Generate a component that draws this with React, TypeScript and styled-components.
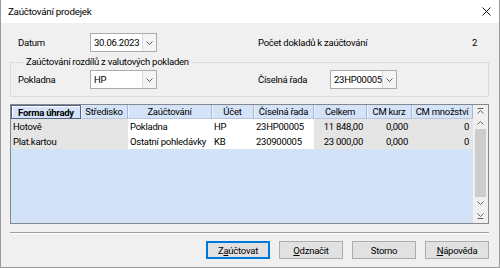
import React from 'react';
import styled, { createGlobalStyle } from 'styled-components';

const GlobalStyle = createGlobalStyle`
  html, body { margin: 0; padding: 0; background: #ffffff; }
  body { font-family: Roboto, "Noto Sans", sans-serif; font-size: 9.5px; color: #000; letter-spacing: -0.25px; }
  * { box-sizing: border-box; }
`;

const Window = styled.div`
  width: 500px;
  height: 268px;
  background: #f0f0f0;
  border: 1px solid #9a9a9a;
  border-top: none;
  display: flex;
  flex-direction: column;
  overflow: hidden;
`;

const TitleBar = styled.div`
  height: 23px;
  flex: none;
  background: #ffffff;
  display: flex;
  align-items: center;
  justify-content: space-between;
  padding: 0 8px 0 7px;
`;

const Title = styled.span`
  font-size: 9.8px;
`;

const Body = styled.div`
  flex: 1;
  display: flex;
  flex-direction: column;
  padding: 0 10px 0 9px;
`;

const FormRow = styled.div<{ $mt?: number; $pl?: number }>`
  display: flex;
  align-items: center;
  height: 19px;
  margin-top: ${(p) => p.$mt ?? 0}px;
  padding-left: ${(p) => p.$pl ?? 0}px;
`;

const Half = styled.div<{ $w?: number }>`
  display: flex;
  align-items: center;
  width: ${(p) => (p.$w ? `${p.$w}px` : 'auto')};
  flex: ${(p) => (p.$w ? 'none' : '1')};
`;

const Label = styled.span<{ $w?: number }>`
  width: ${(p) => (p.$w ? `${p.$w}px` : 'auto')};
  flex: ${(p) => (p.$w ? 'none' : '1')};
`;

const Value = styled.span`
  padding-right: 12px;
`;

const Combo = styled.div`
  width: 67px;
  height: 19px;
  display: flex;
  background: #ffffff;
  border: 1px solid #acacac;
`;

const ComboText = styled.span`
  flex: 1;
  padding-left: 3px;
  line-height: 17px;
  white-space: nowrap;
  overflow: hidden;
`;

const ComboBtn = styled.span`
  width: 14px;
  display: flex;
  align-items: center;
  justify-content: center;
  background: #f4f4f4;
  border-left: 1px solid #d9d9d9;
`;

const Group = styled.fieldset`
  margin: 3px 0 0 0;
  padding: 0 8px 7px 7px;
  border: 1px solid #dcdcdc;
  min-width: 0;
`;

const Legend = styled.legend`
  margin-left: 6px;
  padding: 0 2px;
  line-height: 14px;
`;

const TableFrame = styled.div`
  margin-top: 7px;
  height: 120px;
  display: flex;
  border: 1px solid #828790;
  background: #d3e2f7;
`;

const Grid = styled.div`
  width: 462px;
  display: grid;
  grid-template-columns: 70px 47px 84px 42px 60px 53px 45px 61px;
  grid-auto-rows: 15px;
  grid-template-rows: 14px;
  align-content: start;
`;

const HeadCell = styled.div<{ $active?: boolean }>`
  display: flex;
  align-items: center;
  justify-content: center;
  white-space: nowrap;
  overflow: hidden;
  background: #d4e3f8;
  border-right: 1px solid #a6b7cf;
  border-bottom: 1px solid #b9c8dc;
  font-weight: ${(p) => (p.$active ? 700 : 400)};
  ${(p) =>
    p.$active
      ? 'border: 1px solid #55657f; box-shadow: inset 1px 1px 0 #ffffff;'
      : 'box-shadow: inset 1px 0 0 #eef4fc;'}
`;

const Cell = styled.div<{ $tone: 'gray' | 'white'; $right?: boolean }>`
  display: flex;
  align-items: center;
  justify-content: ${(p) => (p.$right ? 'flex-end' : 'flex-start')};
  padding: ${(p) => (p.$right ? '0 4px 0 0' : '0 0 0 2px')};
  white-space: nowrap;
  overflow: hidden;
  background: ${(p) => (p.$tone === 'gray' ? '#e5e5e5' : '#ffffff')};
`;

const ScrollBar = styled.div`
  width: 15px;
  display: flex;
  flex-direction: column;
  align-items: center;
  background: #f0f0f0;
`;

const ScrollBtn = styled.div<{ $h: number }>`
  height: ${(p) => p.$h}px;
  width: 100%;
  display: flex;
  align-items: center;
  justify-content: center;
  flex: none;
`;

const Thumb = styled.div`
  flex: 1;
  width: 11px;
  background: #cdcdcd;
`;

const Separator = styled.div`
  margin-top: 8px;
  height: 2px;
  border-top: 1px solid #a0a0a0;
  border-bottom: 1px solid #ffffff;
`;

const ButtonRow = styled.div`
  margin-top: 7px;
  display: flex;
  justify-content: flex-end;
  gap: 9px;
`;

const Button = styled.button<{ $default?: boolean }>`
  width: 64px;
  height: 18px;
  padding: 0;
  font-family: inherit;
  font-size: 9.5px;
  letter-spacing: inherit;
  color: #000;
  background: #e1e1e1;
  border: 1px solid ${(p) => (p.$default ? '#0078d7' : '#adadad')};
  box-shadow: ${(p) => (p.$default ? 'inset 0 0 0 1px #0078d7' : 'none')};
`;

const U = styled.span`
  text-decoration: underline;
`;

const Chevron = ({ down = true }: { down?: boolean }) => (
  <svg width="7" height="4" viewBox="0 0 7 4">
    <path
      d={down ? 'M0.5 0.5 L3.5 3.5 L6.5 0.5' : 'M0.5 3.5 L3.5 0.5 L6.5 3.5'}
      fill="none"
      stroke="#606060"
      strokeWidth="1"
    />
  </svg>
);

const DoubleChevron = ({ down = true }: { down?: boolean }) => (
  <svg width="7" height="6" viewBox="0 0 7 6">
    {down ? (
      <>
        <path d="M0.5 0.5 L3.5 3.5 L6.5 0.5" fill="none" stroke="#606060" strokeWidth="1" />
        <path d="M0.5 5.5 H6.5" stroke="#606060" strokeWidth="1" />
      </>
    ) : (
      <>
        <path d="M0.5 0.5 H6.5" stroke="#606060" strokeWidth="1" />
        <path d="M0.5 5.5 L3.5 2.5 L6.5 5.5" fill="none" stroke="#606060" strokeWidth="1" />
      </>
    )}
  </svg>
);

const CloseIcon = () => (
  <svg width="9" height="9" viewBox="0 0 9 9">
    <path d="M0.5 0.5 L8.5 8.5 M8.5 0.5 L0.5 8.5" stroke="#111" strokeWidth="1" />
  </svg>
);

const ComboBox = ({ value }: { value: string }) => (
  <Combo>
    <ComboText>{value}</ComboText>
    <ComboBtn>
      <Chevron />
    </ComboBtn>
  </Combo>
);

const headers = [
  'Forma úhrady',
  'Středisko',
  'Zaúčtování',
  'Účet',
  'Číselná řada',
  'Celkem',
  'CM kurz',
  'CM množství',
];

const tones: ('gray' | 'white')[] = ['gray', 'gray', 'white', 'white', 'white', 'gray', 'gray', 'gray'];
const rightAligned = [false, false, false, false, false, true, true, true];

const rows = [
  ['Hotově', '', 'Pokladna', 'HP', '23HP00005', '11 848,00', '0,000', '0'],
  ['Plat.kartou', '', 'Ostatní pohledávky', 'KB', '230900005', '23 000,00', '0,000', '0'],
];

export default function App() {
  return (
    <>
      <GlobalStyle />
      <Window>
        <TitleBar>
          <Title>Zaúčtování prodejek</Title>
          <CloseIcon />
        </TitleBar>
        <Body>
          <FormRow $mt={10} $pl={8}>
            <Half $w={240}>
              <Label $w={72}>Datum</Label>
              <ComboBox value="30.06.2023" />
            </Half>
            <Half>
              <Label>Počet dokladů k zaúčtování</Label>
              <Value>2</Value>
            </Half>
          </FormRow>
          <Group>
            <Legend>Zaúčtování rozdílů z valutových pokladen</Legend>
            <FormRow $mt={1}>
              <Half $w={240}>
                <Label $w={72}>Pokladna</Label>
                <ComboBox value="HP" />
              </Half>
              <Half>
                <Label $w={72}>Číselná řada</Label>
                <ComboBox value="23HP00005" />
              </Half>
            </FormRow>
          </Group>
          <TableFrame>
            <Grid>
              {headers.map((h, i) => (
                <HeadCell key={h} $active={i === 0}>
                  {h}
                </HeadCell>
              ))}
              {rows.map((r, ri) =>
                r.map((c, ci) => (
                  <Cell key={`${ri}-${ci}`} $tone={tones[ci]} $right={rightAligned[ci]}>
                    {c}
                  </Cell>
                ))
              )}
            </Grid>
            <ScrollBar>
              <ScrollBtn $h={12}>
                <DoubleChevron down={false} />
              </ScrollBtn>
              <ScrollBtn $h={12}>
                <Chevron down={false} />
              </ScrollBtn>
              <Thumb />
              <ScrollBtn $h={12}>
                <Chevron />
              </ScrollBtn>
              <ScrollBtn $h={14}>
                <DoubleChevron />
              </ScrollBtn>
            </ScrollBar>
          </TableFrame>
          <Separator />
          <ButtonRow>
            <Button $default>
              Z<U>a</U>účtovat
            </Button>
            <Button>
              <U>O</U>dznačit
            </Button>
            <Button>Storno</Button>
            <Button>
              <U>N</U>ápověda
            </Button>
          </ButtonRow>
        </Body>
      </Window>
    </>
  );
}
